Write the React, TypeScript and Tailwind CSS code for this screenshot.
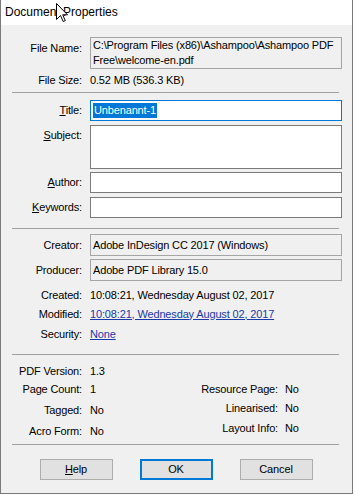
import React from "react";

const font = { fontFamily: '"Liberation Sans", Arial, sans-serif' };

function Label({ children, className = "" }: { children: React.ReactNode; className?: string }) {
  return <div className={`w-[81px] shrink-0 text-right ${className}`}>{children}</div>;
}

function FieldRow({
  label,
  height,
  className = "",
  boxClass,
  children,
}: {
  label: React.ReactNode;
  height: string;
  className?: string;
  boxClass: string;
  children?: React.ReactNode;
}) {
  return (
    <div className={`flex gap-[8px] ${className}`}>
      <Label className="pt-[3px]">{label}</Label>
      <div className={`w-[252px] ${height} ${boxClass} px-[2px]`}>{children}</div>
    </div>
  );
}

function InfoRow({ label, className = "", children }: { label: string; className?: string; children: React.ReactNode }) {
  return (
    <div className={`flex h-[16px] items-center gap-[8px] ${className}`}>
      <Label>{label}</Label>
      <div className="whitespace-nowrap">{children}</div>
    </div>
  );
}

function Separator({ className = "" }: { className?: string }) {
  return <div className={`ml-[11px] h-px w-[327px] bg-[#a0a0a0] ${className}`} />;
}

function Cursor() {
  return (
    <svg className="absolute left-[55px] top-[3px]" width="12" height="20" viewBox="0 0 12 20">
      <path
        d="M0.5 0.5 L0.5 16.5 L4.5 12.5 L7.2 18.5 L9.3 17.6 L6.7 11.8 L11.5 11.8 Z"
        fill="#fff"
        stroke="#000"
        strokeWidth="1"
        strokeLinejoin="miter"
      />
    </svg>
  );
}

const readOnly = "border border-[#a5a5a5] bg-[#f0f0f0]";
const editable = "border border-[#7a7a7a] bg-white";

export default function App() {
  return (
    <div className="h-[495px] w-[355px] bg-white text-[11px] leading-[15px] tracking-[-0.15px] text-black" style={font}>
      <div className="h-[494px] w-[353px] border-x border-b border-[#7a7a7a] bg-[#f0f0f0]">
        {/* Title bar */}
        <div className="relative flex h-[25px] items-center bg-white pl-[4px] text-[12px] tracking-normal">
          Document Properties
          <Cursor />
        </div>

        {/* File info */}
        <div className="mt-[12px] flex gap-[8px]">
          <Label className="pt-[4px]">File Name:</Label>
          <div className={`h-[32px] w-[252px] ${readOnly} px-[2px] whitespace-nowrap`}>
            <div>C:\Program Files (x86)\Ashampoo\Ashampoo PDF</div>
            <div>Free\welcome-en.pdf</div>
          </div>
        </div>
        <InfoRow label="File Size:" className="mt-[3px]">
          0.52 MB (536.3 KB)
        </InfoRow>
        <Separator className="mt-[4px]" />

        {/* Editable fields */}
        <div className="mt-[7px] flex gap-[8px]">
          <Label className="pt-[3px]">
            <span className="underline underline-offset-1">T</span>itle:
          </Label>
          <div className="flex h-[21px] w-[252px] items-center border border-[#0078d7] bg-white px-[2px]">
            <span className="bg-[#0078d7] px-px text-white">Unbenannt-1</span>
          </div>
        </div>
        <FieldRow
          className="mt-[4px]"
          height="h-[44px]"
          boxClass={editable}
          label={
            <>
              <span className="underline underline-offset-1">S</span>ubject:
            </>
          }
        />
        <FieldRow
          className="mt-[3px]"
          height="h-[21px]"
          boxClass={editable}
          label={
            <>
              <span className="underline underline-offset-1">A</span>uthor:
            </>
          }
        />
        <FieldRow
          className="mt-[4px]"
          height="h-[21px]"
          boxClass={editable}
          label={
            <>
              <span className="underline underline-offset-1">K</span>eywords:
            </>
          }
        />
        <Separator className="mt-[10px]" />

        {/* Producer info */}
        <div className="mt-[5px] flex items-center gap-[8px]">
          <Label>Creator:</Label>
          <div className={`flex h-[22px] w-[252px] items-center ${readOnly} px-[2px]`}>
            Adobe InDesign CC 2017 (Windows)
          </div>
        </div>
        <div className="mt-[3px] flex items-center gap-[8px]">
          <Label>Producer:</Label>
          <div className={`flex h-[22px] w-[252px] items-center ${readOnly} px-[2px]`}>
            Adobe PDF Library 15.0
          </div>
        </div>
        <InfoRow label="Created:" className="mt-[6px]">
          10:08:21, Wednesday August 02, 2017
        </InfoRow>
        <InfoRow label="Modified:" className="mt-[3px]">
          <span className="text-[#1a3aa8] underline underline-offset-1">10:08:21, Wednesday August 02, 2017</span>
        </InfoRow>
        <InfoRow label="Security:" className="mt-[4px]">
          <span className="text-[#1a3aa8] underline underline-offset-1">None</span>
        </InfoRow>
        <Separator className="mt-[12px]" />

        {/* PDF details */}
        <div className="flex">
          <div className="w-[120px]">
            <InfoRow label="PDF Version:" className="mt-[8px]">
              1.3
            </InfoRow>
            <InfoRow label="Page Count:" className="mt-[2px]">
              1
            </InfoRow>
            <InfoRow label="Tagged:" className="mt-[5px]">
              No
            </InfoRow>
            <InfoRow label="Acro Form:" className="mt-[5px]">
              No
            </InfoRow>
          </div>
          <div className="pt-[26px]">
            {[
              ["Resource Page:", "mt-0"],
              ["Linearised:", "mt-[3px]"],
              ["Layout Info:", "mt-[4px]"],
            ].map(([label, mt]) => (
              <div key={label} className={`flex h-[16px] items-center gap-[7px] ${mt}`}>
                <div className="w-[157px] text-right">{label}</div>
                <div>No</div>
              </div>
            ))}
          </div>
        </div>
        <Separator className="mt-[5px]" />

        {/* Buttons */}
        <div className="mt-[14px] flex justify-center gap-[27px] pr-[1px]">
          <button className="h-[21px] w-[73px] border border-[#adadad] bg-[#e1e1e1]">
            <span className="underline underline-offset-1">H</span>elp
          </button>
          <button className="h-[21px] w-[73px] border-2 border-[#0078d7] bg-[#e1e1e1]">OK</button>
          <button className="h-[21px] w-[73px] border border-[#adadad] bg-[#e1e1e1]">Cancel</button>
        </div>
      </div>
    </div>
  );
}
